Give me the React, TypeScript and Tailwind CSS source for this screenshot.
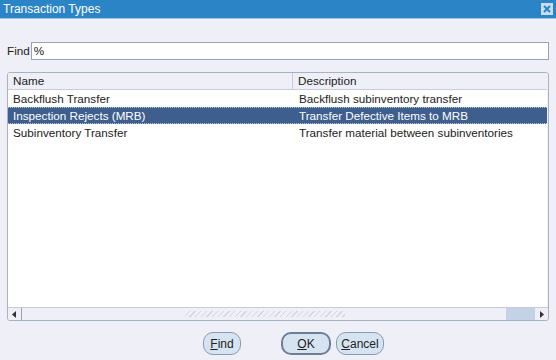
import React from "react";

const rows = [
  { name: "Backflush Transfer", desc: "Backflush subinventory transfer" },
  { name: "Inspection Rejects (MRB)", desc: "Transfer Defective Items to MRB", selected: true },
  { name: "Subinventory Transfer", desc: "Transfer material between subinventories" },
];

function PillButton({ accel, rest, wide, isDefault }: { accel: string; rest: string; wide: string; isDefault?: boolean }) {
  return (
    <button
      className={`${wide} h-[23px] rounded-[10px] bg-[#d6e3f1] text-[12px] text-[#222] flex items-center justify-center ${
        isDefault ? "border-2 border-[#6d7f97]" : "border border-[#8c9ab0]"
      }`}
    >
      <span className="underline">{accel}</span>
      {rest}
    </button>
  );
}

export default function App() {
  return (
    <div className="w-[556px] h-[360px] bg-[#eeeff7] flex flex-col text-[11.7px] text-[#222]" style={{ fontFamily: '"Liberation Sans", Arial, sans-serif' }}>
      {/* title bar */}
      <div className="h-[19px] bg-[#2a84c6] flex items-center justify-between pl-[3px] pr-[3px] border-b border-[#9ec6e6]">
        <span className="text-white text-[12px] leading-none">Transaction Types</span>
        <div className="w-[12px] h-[12px] bg-[#c8ddf0] flex items-center justify-center">
          <svg width="8" height="8" viewBox="0 0 8 8">
            <path d="M1 1L7 7M7 1L1 7" stroke="#2a84c6" strokeWidth="2" />
          </svg>
        </div>
      </div>

      {/* find row */}
      <div className="flex items-center mt-[23px] pl-[7px] pr-[7px]">
        <span className="mr-[1px]">Find</span>
        <div className="flex-1 h-[18px] bg-white border border-[#9aa3b5] flex items-center pl-[2px]">%</div>
      </div>

      {/* table */}
      <div className="mx-[7px] mt-[12px] h-[249px] border border-[#a9b2c3] rounded-[3px] bg-[#eeeff7] flex flex-col overflow-hidden">
        <div className="flex-1 flex flex-col bg-white mr-[1px]">
          <div className="flex h-[17px] bg-[#eeeff7] border-b border-[#c8ccd8]">
            <div className="w-[285px] pl-[5px] flex items-center border-r border-[#c8ccd8]">Name</div>
            <div className="flex-1 pl-[5px] flex items-center">Description</div>
          </div>
          {rows.map((r) => (
            <div
              key={r.name}
              className={`flex h-[17px] ${
                r.selected ? "bg-[#3e5e8e] text-white border-y border-dotted border-[#b9c6da]" : ""
              }`}
            >
              <div className="w-[285px] pl-[5px] flex items-center">{r.name}</div>
              <div className="flex-1 pl-[6px] flex items-center">{r.desc}</div>
            </div>
          ))}
        </div>
        {/* horizontal scrollbar */}
        <div className="h-[13px] flex items-center bg-[#eeeff7] border-t border-[#c8ccd8]">
          <div className="w-[14px] h-[13px] flex items-center justify-center border-r border-[#9aa3b5] rounded-l-[3px]">
            <svg width="5" height="7" viewBox="0 0 5 7"><path d="M4 0L0 3.5L4 7Z" fill="#333" /></svg>
          </div>
          <div className="flex-1 h-full relative">
            <div className="absolute left-[163px] top-[3px] w-[160px] h-[6px] bg-[repeating-linear-gradient(135deg,transparent_0,transparent_3px,#c5cad6_3px,#c5cad6_4px)] opacity-70" />
          </div>
          <div className="w-[29px] h-full bg-[#c3d2e6]" />
          <div className="w-[13px] h-full flex items-center justify-center rounded-r-[3px]">
            <svg width="5" height="7" viewBox="0 0 5 7"><path d="M1 0L5 3.5L1 7Z" fill="#333" /></svg>
          </div>
        </div>
      </div>

      {/* buttons */}
      <div className="flex mt-[11px] pl-[203px]">
        <PillButton accel="F" rest="ind" wide="w-[38px]" />
        <div className="w-[40px]" />
        <PillButton accel="O" rest="K" wide="w-[50px]" isDefault />
        <div className="w-[5px]" />
        <PillButton accel="C" rest="ancel" wide="w-[48px]" />
      </div>
    </div>
  );
}
